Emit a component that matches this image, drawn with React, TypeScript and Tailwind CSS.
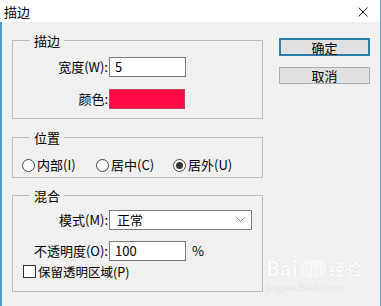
import React from 'react';

const font = { fontFamily: '"Noto Sans CJK SC", "Microsoft YaHei", sans-serif' };

function Legend({ children }: { children: React.ReactNode }) {
  return <legend className="ml-[17px] px-[4px] text-[13px] leading-[15px] text-black">{children}</legend>;
}

function Radio({ checked, label }: { checked?: boolean; label: string }) {
  return (
    <div className="flex items-center gap-[2px]">
      <span className="w-[13px] h-[13px] rounded-full border border-[#444] bg-white flex items-center justify-center">
        {checked && <span className="w-[7px] h-[7px] rounded-full bg-[#333]" />}
      </span>
      <span className="text-[13px] leading-[16px]">{label}</span>
    </div>
  );
}

export default function App() {
  return (
    <div className="w-[381px] h-[306px] bg-[#f0f0f0] text-black relative overflow-hidden" style={font}>
      {/* title bar */}
      <div className="h-[22px] bg-white flex items-center justify-between pl-[4px] pr-[12px] border-r border-[#5aa0c8]">
        <span className="text-[13px] leading-none">描边</span>
        <svg width="10" height="10" viewBox="0 0 10 10" className="mt-[2px]">
          <path d="M0.5 0.5 L9.5 9.5 M9.5 0.5 L0.5 9.5" stroke="#222" strokeWidth="1" />
        </svg>
      </div>

      <div className="flex h-[284px] border-l-2 border-r border-l-[#4f9bc4] border-r-[#5aa0c8]">
        {/* left column */}
        <div className="w-[251px] ml-[10px] flex flex-col">
          <fieldset className="mt-[11px] border border-[#bcbcbc] pt-[9px] pb-[9px]">
            <Legend>描边</Legend>
            <div className="flex items-center h-[20px]">
              <span className="w-[95px] text-right text-[13px]">宽度(W):</span>
              <div className="ml-[1px] w-[77px] h-[20px] bg-white border border-[#7a7a7a] px-[5px] text-[13px] leading-[18px]">5</div>
            </div>
            <div className="flex items-center h-[20px] mt-[12px]">
              <span className="w-[95px] text-right text-[13px]">颜色:</span>
              <div className="ml-[1px] w-[76px] h-[20px] bg-[#ff0a46] border border-[#c0405e]" />
            </div>
          </fieldset>

          <fieldset className="mt-[11px] border border-[#bcbcbc] pt-[12px] pb-[4px]">
            <Legend>位置</Legend>
            <div className="flex items-center h-[16px] pl-[9px]">
              <div className="w-[74px]"><Radio label="内部(I)" /></div>
              <div className="w-[77px]"><Radio label="居中(C)" /></div>
              <Radio checked label="居外(U)" />
            </div>
          </fieldset>

          <fieldset className="mt-[10px] border border-[#bcbcbc] pt-[7px] pb-[13px]">
            <Legend>混合</Legend>
            <div className="flex items-center h-[20px]">
              <span className="w-[95px] text-right text-[13px]">模式(M):</span>
              <div className="ml-[1px] w-[143px] h-[20px] bg-white border border-[#7a7a7a] pl-[7px] pr-[6px] flex items-center justify-between text-[13px]">
                <span>正常</span>
                <svg width="9" height="6" viewBox="0 0 9 6">
                  <path d="M0.5 0.5 L4.5 4.5 L8.5 0.5" fill="none" stroke="#777" strokeWidth="1" />
                </svg>
              </div>
            </div>
            <div className="flex items-center h-[20px] mt-[11px]">
              <span className="w-[95px] text-right text-[13px]">不透明度(O):</span>
              <div className="ml-[1px] w-[77px] h-[20px] bg-white border border-[#7a7a7a] px-[5px] text-[13px] leading-[18px]">100</div>
              <span className="ml-[6px] text-[13px]">%</span>
            </div>
            <div className="flex items-center h-[13px] mt-[4px] pl-[10px] gap-[2px]">
              <span className="w-[13px] h-[13px] border border-[#333] bg-white" />
              <span className="text-[12.5px] leading-[16px]">保留透明区域(P)</span>
            </div>
          </fieldset>
        </div>

        {/* buttons */}
        <div className="ml-[16px] mt-[16px] flex flex-col gap-[11px]">
          <button className="w-[91px] h-[18px] bg-[#e1e1e1] border-2 border-[#2f78b0] text-[13px] leading-none flex items-center justify-center">确定</button>
          <button className="w-[91px] h-[17px] bg-[#e1e1e1] border border-[#adadad] text-[13px] leading-none flex items-center justify-center">取消</button>
        </div>
      </div>

      {/* watermark */}
      <div className="absolute left-[266px] top-[258px] flex flex-col items-start gap-[5px] pointer-events-none select-none">
        <div className="flex items-end gap-[3px] text-[#fbfbfb] text-[20px] font-bold leading-[20px]" style={{ textShadow: '0 0 1px #c8c8c8' }}>
          <span>Bai</span>
          <span className="text-[15px] leading-[18px] rounded-full bg-[#f7f7f7] px-[3px]">du</span>
          <span className="text-[16px] leading-[20px]">经验</span>
        </div>
        <span className="text-[9px] text-[#e4e4e4] leading-[10px]">jingyan.baidu.com</span>
      </div>
    </div>
  );
}
